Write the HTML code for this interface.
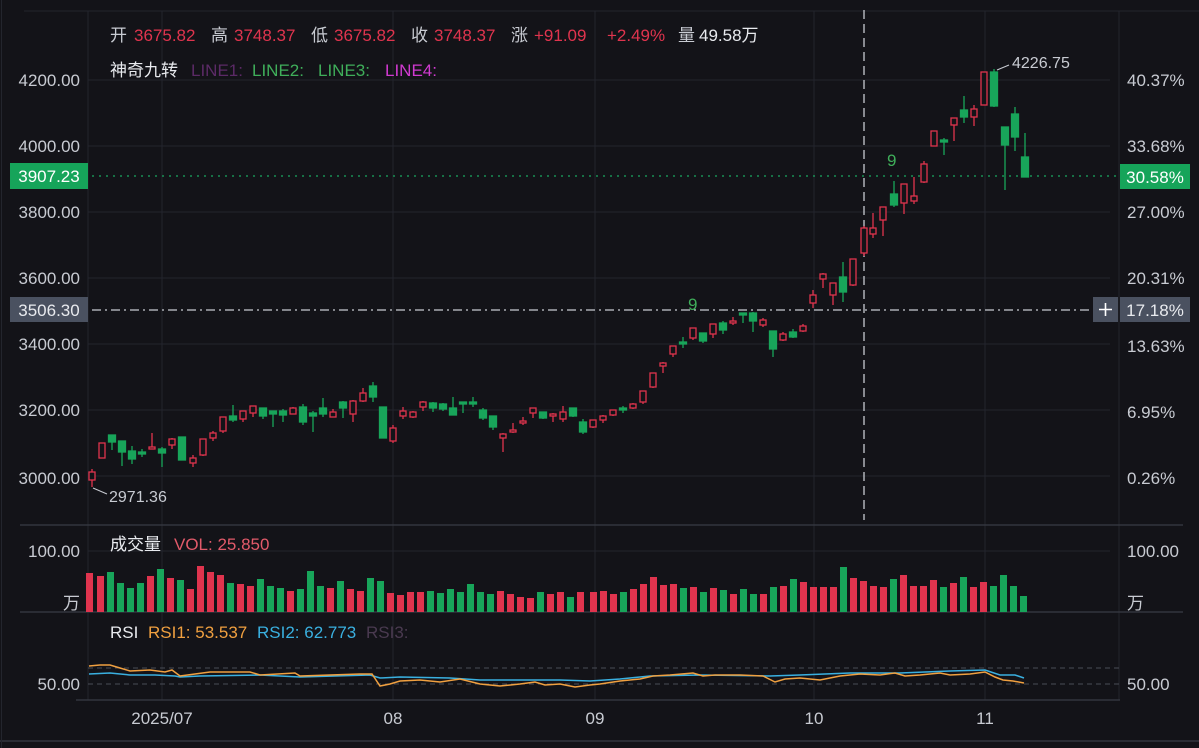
<!DOCTYPE html>
<html><head><meta charset="utf-8">
<style>
html,body{margin:0;padding:0;background:#131318;}
body{width:1199px;height:748px;overflow:hidden;position:relative;font-family:"Liberation Sans","Noto Sans CJK SC",sans-serif;}
svg{position:absolute;left:0;top:0;}
</style></head><body>
<svg width="1199" height="748" viewBox="0 0 1199 748" xmlns="http://www.w3.org/2000/svg" font-family="Liberation Sans, Noto Sans CJK SC, sans-serif">
<rect width="1199" height="748" fill="#131318"/>
<g stroke="#23252d" stroke-width="1">
<line x1="24" y1="11" x2="1199" y2="11"/>
<line x1="88" y1="80" x2="1110" y2="80"/><line x1="88" y1="146" x2="1110" y2="146"/>
<line x1="88" y1="212" x2="1110" y2="212"/><line x1="88" y1="278" x2="1110" y2="278"/>
<line x1="88" y1="344" x2="1110" y2="344"/><line x1="88" y1="410" x2="1110" y2="410"/>
<line x1="88" y1="476" x2="1110" y2="476"/><line x1="88" y1="551" x2="1110" y2="551"/>
<line x1="88" y1="11" x2="88" y2="700"/>
<line x1="162" y1="11" x2="162" y2="700"/><line x1="393" y1="11" x2="393" y2="700"/>
<line x1="595" y1="11" x2="595" y2="700"/><line x1="814" y1="11" x2="814" y2="700"/>
<line x1="985" y1="11" x2="985" y2="700"/><line x1="1119" y1="11" x2="1119" y2="700"/>
</g>
<g stroke="#383b44" stroke-width="1.2">
<line x1="20" y1="525" x2="1183" y2="525"/>
<line x1="20" y1="612" x2="1183" y2="612"/>
<line x1="76" y1="700" x2="1120" y2="700"/>
<line x1="0" y1="741" x2="1199" y2="741"/>
</g>
<line x1="1.5" y1="0" x2="1.5" y2="748" stroke="#23252d"/>
<g stroke="#4a4d56" stroke-width="1" stroke-dasharray="5,4">
<line x1="88" y1="668" x2="1120" y2="668"/><line x1="88" y1="684" x2="1120" y2="684"/>
</g>
<line x1="92" y1="176" x2="1118" y2="176" stroke="#1aa860" stroke-width="1.2" stroke-dasharray="2,5"/>
<line x1="92" y1="310" x2="1092" y2="310" stroke="#c8cbd2" stroke-width="1.3" stroke-dasharray="9,4,2,4"/>
<line x1="864" y1="10" x2="864" y2="520" stroke="#c8cbd2" stroke-width="1.3" stroke-dasharray="9,5"/>

<g>
<g stroke="#18a55a" stroke-width="1.3" fill="#18a55a">
<line x1="112" y1="435" x2="112" y2="450"/><rect x="108.5" y="435" width="7" height="7"/>
<line x1="122" y1="441" x2="122" y2="466"/><rect x="118.5" y="441" width="7" height="11"/>
<line x1="132" y1="446" x2="132" y2="464"/><rect x="128.5" y="451" width="7" height="8"/>
<line x1="142" y1="449" x2="142" y2="457"/><rect x="138.5" y="452" width="7" height="2"/>
<line x1="162" y1="447" x2="162" y2="467"/><rect x="158.5" y="449" width="7" height="4"/>
<line x1="182" y1="437" x2="182" y2="460"/><rect x="178.5" y="437" width="7" height="23"/>
<line x1="233" y1="405" x2="233" y2="422"/><rect x="229.5" y="416" width="7" height="4"/>
<line x1="263" y1="408" x2="263" y2="419"/><rect x="259.5" y="408" width="7" height="8"/>
<line x1="273" y1="411" x2="273" y2="427"/><rect x="269.5" y="411" width="7" height="3"/>
<line x1="283" y1="409" x2="283" y2="422"/><rect x="279.5" y="411" width="7" height="4"/>
<line x1="303" y1="404" x2="303" y2="425"/><rect x="299.5" y="407" width="7" height="15"/>
<line x1="313" y1="411" x2="313" y2="432"/><rect x="309.5" y="413" width="7" height="3"/>
<line x1="323" y1="398" x2="323" y2="417"/><rect x="319.5" y="408" width="7" height="6"/>
<line x1="343" y1="401" x2="343" y2="418"/><rect x="339.5" y="402" width="7" height="6"/>
<line x1="373" y1="382" x2="373" y2="402"/><rect x="369.5" y="386" width="7" height="11"/>
<line x1="383" y1="407" x2="383" y2="438"/><rect x="379.5" y="407" width="7" height="31"/>
<line x1="433" y1="402" x2="433" y2="412"/><rect x="429.5" y="403" width="7" height="5"/>
<line x1="443" y1="403" x2="443" y2="411"/><rect x="439.5" y="404" width="7" height="5"/>
<line x1="453" y1="397" x2="453" y2="415"/><rect x="449.5" y="408" width="7" height="7"/>
<line x1="463" y1="402" x2="463" y2="413"/><rect x="459.5" y="402" width="7" height="2"/>
<line x1="473" y1="397" x2="473" y2="407"/><rect x="469.5" y="402" width="7" height="2"/>
<line x1="483" y1="408" x2="483" y2="420"/><rect x="479.5" y="410" width="7" height="8"/>
<line x1="493" y1="416" x2="493" y2="430"/><rect x="489.5" y="416" width="7" height="11"/>
<line x1="543" y1="412" x2="543" y2="419"/><rect x="539.5" y="412" width="7" height="6"/>
<line x1="573" y1="408" x2="573" y2="417"/><rect x="569.5" y="408" width="7" height="8"/>
<line x1="583" y1="419" x2="583" y2="434"/><rect x="579.5" y="422" width="7" height="10"/>
<line x1="623" y1="406" x2="623" y2="413"/><rect x="619.5" y="408" width="7" height="2"/>
<line x1="683" y1="337" x2="683" y2="348"/><rect x="679.5" y="342" width="7" height="2"/>
<line x1="703" y1="333" x2="703" y2="343"/><rect x="699.5" y="333" width="7" height="8"/>
<line x1="723" y1="321" x2="723" y2="334"/><rect x="719.5" y="323" width="7" height="7"/>
<line x1="743" y1="313" x2="743" y2="323"/><rect x="739.5" y="313" width="7" height="2"/>
<line x1="753" y1="312" x2="753" y2="332"/><rect x="749.5" y="313" width="7" height="8"/>
<line x1="773" y1="331" x2="773" y2="357"/><rect x="769.5" y="331" width="7" height="18"/>
<line x1="793" y1="329" x2="793" y2="338"/><rect x="789.5" y="332" width="7" height="5"/>
<line x1="843" y1="262" x2="843" y2="302"/><rect x="839.5" y="277" width="7" height="15"/>
<line x1="894" y1="181" x2="894" y2="207"/><rect x="890.5" y="194" width="7" height="11"/>
<line x1="944" y1="138" x2="944" y2="155"/><rect x="940.5" y="140" width="7" height="2"/>
<line x1="964" y1="96" x2="964" y2="123"/><rect x="960.5" y="110" width="7" height="7"/>
<line x1="994" y1="69" x2="994" y2="107"/><rect x="990.5" y="72" width="7" height="34"/>
<line x1="1005" y1="127" x2="1005" y2="190"/><rect x="1001.5" y="127" width="7" height="18"/>
<line x1="1015" y1="107" x2="1015" y2="151"/><rect x="1011.5" y="114" width="7" height="23"/>
<line x1="1025" y1="133" x2="1025" y2="177"/><rect x="1021.5" y="157" width="7" height="20"/>
</g>
<g stroke="#e0344e" stroke-width="1.3" fill="#131318">
<line x1="92" y1="469" x2="92" y2="487"/><rect x="89" y="472" width="6" height="8"/>
<line x1="102" y1="443" x2="102" y2="458"/><rect x="99" y="443" width="6" height="15"/>
<line x1="152" y1="433" x2="152" y2="449"/><rect x="149" y="447" width="6" height="2"/>
<line x1="172" y1="438" x2="172" y2="449"/><rect x="169" y="439" width="6" height="6"/>
<line x1="193" y1="455" x2="193" y2="467"/><rect x="190" y="458" width="6" height="5"/>
<line x1="203" y1="439" x2="203" y2="456"/><rect x="200" y="439" width="6" height="16"/>
<line x1="213" y1="431" x2="213" y2="441"/><rect x="210" y="433" width="6" height="5"/>
<line x1="223" y1="417" x2="223" y2="433"/><rect x="220" y="417" width="6" height="14"/>
<line x1="243" y1="411" x2="243" y2="422"/><rect x="240" y="411" width="6" height="8"/>
<line x1="253" y1="406" x2="253" y2="417"/><rect x="250" y="406" width="6" height="7"/>
<line x1="293" y1="407" x2="293" y2="414"/><rect x="290" y="408" width="6" height="6"/>
<line x1="333" y1="409" x2="333" y2="417"/><rect x="330" y="412" width="6" height="5"/>
<line x1="353" y1="400" x2="353" y2="422"/><rect x="350" y="401" width="6" height="13"/>
<line x1="363" y1="388" x2="363" y2="402"/><rect x="360" y="393" width="6" height="8"/>
<line x1="393" y1="425" x2="393" y2="443"/><rect x="390" y="428" width="6" height="13"/>
<line x1="403" y1="407" x2="403" y2="419"/><rect x="400" y="411" width="6" height="5"/>
<line x1="413" y1="411" x2="413" y2="418"/><rect x="410" y="412" width="6" height="5"/>
<line x1="423" y1="401" x2="423" y2="411"/><rect x="420" y="402" width="6" height="5"/>
<line x1="503" y1="433" x2="503" y2="452"/><rect x="500" y="434" width="6" height="4"/>
<line x1="513" y1="423" x2="513" y2="433"/><rect x="510" y="430" width="6" height="2"/>
<line x1="523" y1="417" x2="523" y2="425"/><rect x="520" y="421" width="6" height="2"/>
<line x1="533" y1="408" x2="533" y2="418"/><rect x="530" y="408" width="6" height="5"/>
<line x1="553" y1="413" x2="553" y2="422"/><rect x="550" y="414" width="6" height="2"/>
<line x1="563" y1="406" x2="563" y2="422"/><rect x="560" y="412" width="6" height="7"/>
<line x1="593" y1="420" x2="593" y2="428"/><rect x="590" y="420" width="6" height="7"/>
<line x1="603" y1="415" x2="603" y2="423"/><rect x="600" y="416" width="6" height="4"/>
<line x1="613" y1="410" x2="613" y2="416"/><rect x="610" y="410" width="6" height="5"/>
<line x1="633" y1="403" x2="633" y2="409"/><rect x="630" y="404" width="6" height="4"/>
<line x1="643" y1="391" x2="643" y2="404"/><rect x="640" y="391" width="6" height="11"/>
<line x1="653" y1="373" x2="653" y2="388"/><rect x="650" y="373" width="6" height="14"/>
<line x1="663" y1="362" x2="663" y2="373"/><rect x="660" y="363" width="6" height="3"/>
<line x1="673" y1="346" x2="673" y2="357"/><rect x="670" y="346" width="6" height="8"/>
<line x1="693" y1="328" x2="693" y2="340"/><rect x="690" y="328" width="6" height="10"/>
<line x1="713" y1="324" x2="713" y2="338"/><rect x="710" y="324" width="6" height="10"/>
<line x1="733" y1="317" x2="733" y2="325"/><rect x="730" y="321" width="6" height="2"/>
<line x1="763" y1="318" x2="763" y2="327"/><rect x="760" y="320" width="6" height="5"/>
<line x1="783" y1="332" x2="783" y2="341"/><rect x="780" y="334" width="6" height="6"/>
<line x1="803" y1="324" x2="803" y2="332"/><rect x="800" y="326" width="6" height="5"/>
<line x1="813" y1="290" x2="813" y2="308"/><rect x="810" y="295" width="6" height="8"/>
<line x1="823" y1="273" x2="823" y2="288"/><rect x="820" y="274" width="6" height="5"/>
<line x1="833" y1="283" x2="833" y2="305"/><rect x="830" y="283" width="6" height="12"/>
<line x1="853" y1="259" x2="853" y2="286"/><rect x="850" y="259" width="6" height="26"/>
<line x1="864" y1="226" x2="864" y2="256"/><rect x="861" y="228" width="6" height="25"/>
<line x1="873" y1="213" x2="873" y2="238"/><rect x="870" y="228" width="6" height="6"/>
<line x1="883" y1="207" x2="883" y2="236"/><rect x="880" y="207" width="6" height="13"/>
<line x1="904" y1="184" x2="904" y2="214"/><rect x="901" y="184" width="6" height="19"/>
<line x1="914" y1="177" x2="914" y2="204"/><rect x="911" y="196" width="6" height="5"/>
<line x1="924" y1="161" x2="924" y2="183"/><rect x="921" y="164" width="6" height="18"/>
<line x1="934" y1="131" x2="934" y2="146"/><rect x="931" y="131" width="6" height="15"/>
<line x1="954" y1="118" x2="954" y2="141"/><rect x="951" y="118" width="6" height="7"/>
<line x1="974" y1="105" x2="974" y2="126"/><rect x="971" y="109" width="6" height="8"/>
<line x1="984" y1="72" x2="984" y2="105"/><rect x="981" y="72" width="6" height="33"/>
</g>
</g>
<text x="688" y="310" fill="#3fae5a" font-size="17">9</text>
<text x="887" y="166" fill="#3fae5a" font-size="17">9</text>
<line x1="997" y1="70" x2="1009" y2="65" stroke="#c8cbd2" stroke-width="1"/>
<text x="1012" y="68" fill="#c8cbd2" font-size="16">4226.75</text>
<line x1="93" y1="488" x2="107" y2="494" stroke="#c8cbd2" stroke-width="1"/>
<text x="109" y="502" fill="#c8cbd2" font-size="16">2971.36</text>

<g fill="#e0344e">
<rect x="86" y="573" width="7" height="39"/><rect x="97" y="576" width="7" height="36"/>
<rect x="147" y="576" width="7" height="36"/><rect x="167" y="578" width="7" height="34"/>
<rect x="187" y="589" width="7" height="23"/><rect x="197" y="566" width="7" height="46"/>
<rect x="207" y="572" width="7" height="40"/><rect x="217" y="575" width="7" height="37"/>
<rect x="237" y="584" width="7" height="28"/><rect x="247" y="586" width="7" height="26"/>
<rect x="287" y="591" width="7" height="21"/><rect x="327" y="588" width="7" height="24"/>
<rect x="347" y="589" width="7" height="23"/><rect x="357" y="591" width="7" height="21"/>
<rect x="387" y="593" width="7" height="19"/><rect x="397" y="595" width="7" height="17"/>
<rect x="407" y="592" width="7" height="20"/><rect x="417" y="592" width="7" height="20"/>
<rect x="497" y="591" width="7" height="21"/><rect x="507" y="594" width="7" height="18"/>
<rect x="517" y="597" width="7" height="15"/><rect x="527" y="598" width="7" height="14"/>
<rect x="547" y="594" width="7" height="18"/><rect x="557" y="592" width="7" height="20"/>
<rect x="577" y="592" width="7" height="20"/>
<rect x="590" y="592" width="7" height="20"/><rect x="600" y="591" width="7" height="21"/>
<rect x="610" y="594" width="7" height="18"/><rect x="630" y="589" width="7" height="23"/>
<rect x="640" y="584" width="7" height="28"/><rect x="650" y="577" width="7" height="35"/>
<rect x="660" y="585" width="7" height="27"/><rect x="670" y="584" width="7" height="28"/>
<rect x="690" y="587" width="7" height="25"/><rect x="710" y="588" width="7" height="24"/>
<rect x="730" y="594" width="7" height="18"/><rect x="760" y="594" width="7" height="18"/>
<rect x="780" y="586" width="7" height="26"/><rect x="800" y="582" width="7" height="30"/>
<rect x="810" y="587" width="7" height="25"/><rect x="820" y="587" width="7" height="25"/>
<rect x="830" y="587" width="7" height="25"/><rect x="850" y="578" width="7" height="34"/>
<rect x="860" y="581" width="7" height="31"/><rect x="870" y="586" width="7" height="26"/>
<rect x="880" y="587" width="7" height="25"/><rect x="900" y="575" width="7" height="37"/>
<rect x="910" y="586" width="7" height="26"/><rect x="920" y="586" width="7" height="26"/>
<rect x="930" y="580" width="7" height="32"/><rect x="950" y="583" width="7" height="29"/>
<rect x="970" y="587" width="7" height="25"/><rect x="980" y="582" width="7" height="30"/>
</g>
<g fill="#18a55a">
<rect x="107" y="572" width="7" height="40"/><rect x="117" y="583" width="7" height="29"/>
<rect x="127" y="588" width="7" height="24"/><rect x="137" y="583" width="7" height="29"/>
<rect x="157" y="569" width="7" height="43"/><rect x="177" y="580" width="7" height="32"/>
<rect x="227" y="583" width="7" height="29"/><rect x="257" y="579" width="7" height="33"/>
<rect x="267" y="586" width="7" height="26"/><rect x="277" y="588" width="7" height="24"/>
<rect x="297" y="589" width="7" height="23"/><rect x="307" y="571" width="7" height="41"/>
<rect x="317" y="586" width="7" height="26"/><rect x="337" y="581" width="7" height="31"/>
<rect x="367" y="578" width="7" height="34"/><rect x="377" y="581" width="7" height="31"/>
<rect x="427" y="591" width="7" height="21"/><rect x="437" y="593" width="7" height="19"/>
<rect x="447" y="589" width="7" height="23"/><rect x="457" y="592" width="7" height="20"/>
<rect x="467" y="584" width="7" height="28"/><rect x="477" y="592" width="7" height="20"/>
<rect x="487" y="594" width="7" height="18"/><rect x="537" y="592" width="7" height="20"/>
<rect x="567" y="597" width="7" height="15"/>
<rect x="620" y="592" width="7" height="20"/><rect x="680" y="588" width="7" height="24"/>
<rect x="700" y="592" width="7" height="20"/><rect x="720" y="590" width="7" height="22"/>
<rect x="740" y="589" width="7" height="23"/><rect x="750" y="594" width="7" height="18"/>
<rect x="770" y="587" width="7" height="25"/><rect x="790" y="579" width="7" height="33"/>
<rect x="840" y="567" width="7" height="45"/><rect x="890" y="579" width="7" height="33"/>
<rect x="940" y="587" width="7" height="25"/><rect x="960" y="577" width="7" height="35"/>
<rect x="990" y="586" width="7" height="26"/><rect x="1000" y="575" width="7" height="37"/>
<rect x="1010" y="586" width="7" height="26"/><rect x="1020" y="596" width="7" height="16"/>
</g>

<polyline fill="none" stroke="#3ab0e0" stroke-width="1.5" points="89,674 110,673 130,675 155,675 175,676 180,677 200,676 260,675 300,677 370,675 380,678 400,677 450,678 480,680 520,680 560,680 590,681 620,679 650,676 700,675 770,676 800,675 850,673 900,673 950,671 985,670 1000,675 1015,675 1024,678"/>
<polyline fill="none" stroke="#f0a040" stroke-width="1.5" points="89,666 100,665 110,665 120,668 130,671 150,670 165,672 172,670 180,676 195,674 210,672 250,672 260,675 295,673 300,676 360,674 372,674 380,686 390,684 400,681 420,680 440,682 460,679 480,684 500,686 520,684 535,682 545,685 560,684 575,687 590,685 600,684 620,681 640,679 653,676 670,675 693,673 703,676 715,675 740,675 763,676 775,682 785,679 800,678 820,680 840,676 860,674 880,675 895,673 905,676 920,675 940,673 950,675 970,674 985,672 995,677 1003,680 1013,681 1024,683"/>

<g font-size="17">
<text x="110" y="41" fill="#c8cbd2">开</text><text x="134" y="41" fill="#e0344e">3675.82</text>
<text x="211" y="41" fill="#c8cbd2">高</text><text x="234" y="41" fill="#e0344e">3748.37</text>
<text x="311" y="41" fill="#c8cbd2">低</text><text x="334" y="41" fill="#e0344e">3675.82</text>
<text x="411" y="41" fill="#c8cbd2">收</text><text x="434" y="41" fill="#e0344e">3748.37</text>
<text x="511" y="41" fill="#c8cbd2">涨</text><text x="534" y="41" fill="#e0344e">+91.09</text>
<text x="607" y="41" fill="#e0344e">+2.49%</text>
<text x="678" y="41" fill="#c8cbd2">量</text><text x="699" y="41" fill="#e8eaee">49.58万</text>
<text x="110" y="76" fill="#e8eaee">神奇九转</text>
<text x="191" y="76" fill="#5b2a66">LINE1:</text>
<text x="252" y="76" fill="#3fae5a">LINE2:</text>
<text x="318" y="76" fill="#3fae5a">LINE3:</text>
<text x="385" y="76" fill="#d03ad0">LINE4:</text>
<text x="110" y="550" fill="#e8eaee">成交量</text><text x="174" y="550" fill="#e25a6a">VOL: 25.850</text>
<text x="110" y="638" fill="#e8eaee">RSI</text>
<text x="148" y="638" fill="#f0a040">RSI1: 53.537</text>
<text x="257" y="638" fill="#3ab0e0">RSI2: 62.773</text>
<text x="366" y="638" fill="#4a3a50">RSI3:</text>
</g>
<g font-size="17" fill="#c8cbd2" text-anchor="end">
<text x="80" y="86">4200.00</text><text x="80" y="152">4000.00</text>
<text x="80" y="218">3800.00</text><text x="80" y="284">3600.00</text>
<text x="80" y="350">3400.00</text><text x="80" y="416">3200.00</text>
<text x="80" y="484">3000.00</text>
<text x="80" y="557">100.00</text><text x="80" y="609">万</text>
<text x="80" y="690">50.00</text>
</g>
<rect x="10" y="163" width="78" height="26" fill="#16a45a"/>
<text x="49" y="182" font-size="17" fill="#fff" text-anchor="middle">3907.23</text>
<rect x="10" y="297" width="78" height="25" fill="#4a5160"/>
<text x="49" y="316" font-size="17" fill="#e8eaee" text-anchor="middle">3506.30</text>
<g font-size="17" fill="#c8cbd2">
<text x="1127" y="86">40.37%</text><text x="1127" y="152">33.68%</text>
<text x="1127" y="218">27.00%</text><text x="1127" y="284">20.31%</text>
<text x="1127" y="352">13.63%</text><text x="1127" y="418">6.95%</text>
<text x="1127" y="484">0.26%</text>
<text x="1127" y="557">100.00</text><text x="1127" y="609">万</text>
<text x="1127" y="690">50.00</text>
</g>
<rect x="1120" y="164" width="70" height="25" fill="#16a45a"/>
<text x="1155" y="183" font-size="17" fill="#fff" text-anchor="middle">30.58%</text>
<rect x="1093" y="297" width="25" height="25" fill="#4a5160"/>
<path d="M1099 309.5h13M1105.5 303v13" stroke="#fff" stroke-width="1.6"/>
<rect x="1120" y="297" width="70" height="25" fill="#4a5160"/>
<text x="1155" y="316" font-size="17" fill="#e8eaee" text-anchor="middle">17.18%</text>
<g font-size="17" fill="#c8cbd2" text-anchor="middle">
<text x="162" y="724">2025/07</text><text x="393" y="724">08</text>
<text x="595" y="724">09</text><text x="814" y="724">10</text><text x="985" y="724">11</text>
</g>
</svg>
</body></html>
